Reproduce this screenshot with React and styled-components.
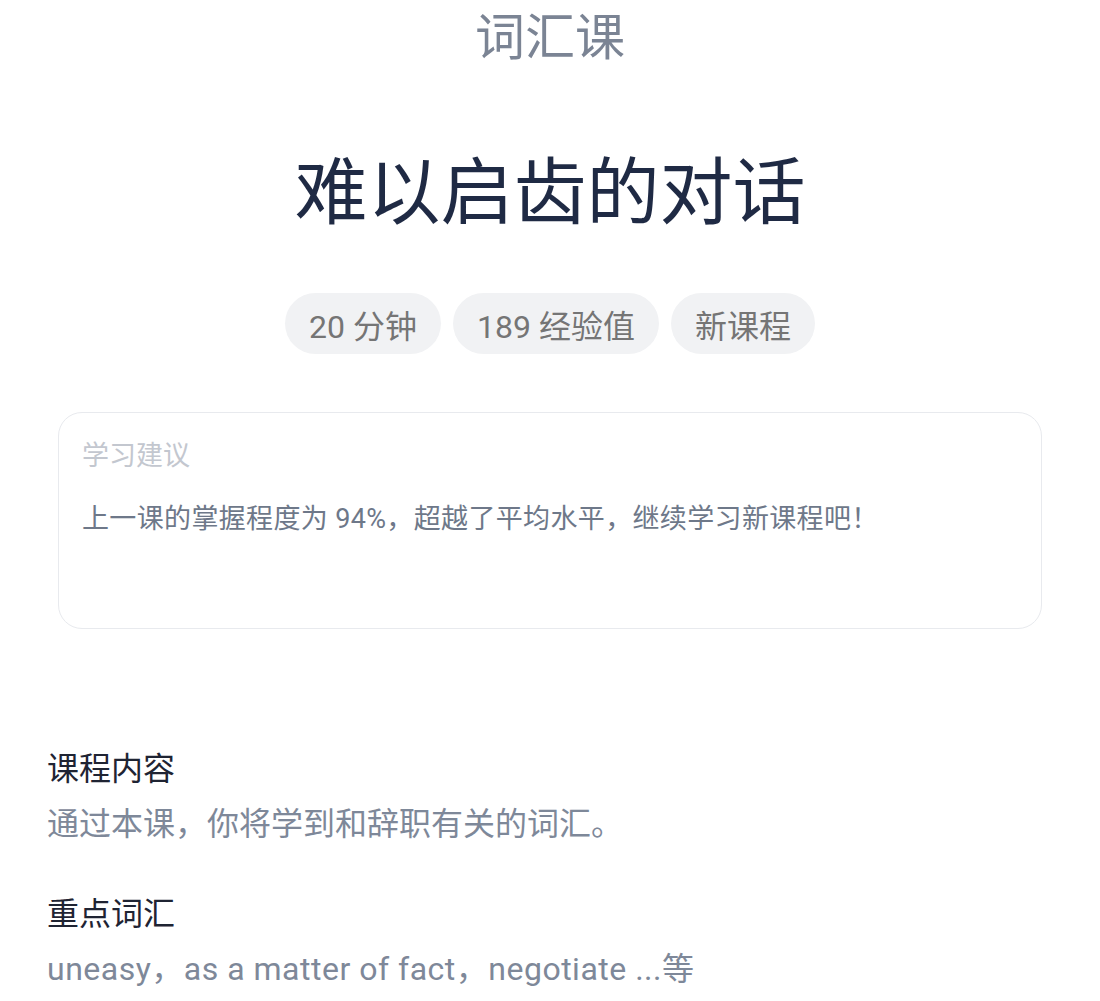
import React from "react";
import styled, { createGlobalStyle } from "styled-components";

const Global = createGlobalStyle`
  html, body { margin: 0; padding: 0; background: #ffffff; }
  body { font-family: Roboto, "Noto Sans CJK SC", sans-serif; }
`;

const Page = styled.div`
  width: 1100px;
  display: flex;
  flex-direction: column;
  align-items: center;
`;

const Category = styled.div`
  font-size: 50px;
  line-height: 76px;
  color: #7b8494;
`;

const Title = styled.h1`
  margin: 67px 0 0;
  font-size: 73px;
  line-height: 100px;
  font-weight: 400;
  color: #1f2a44;
`;

const ChipRow = styled.div`
  margin-top: 50px;
  display: flex;
  gap: 12px;
`;

const Chip = styled.span`
  height: 61px;
  padding: 0 24px;
  border-radius: 31px;
  background: #f1f2f4;
  color: #757575;
  font-size: 32px;
  display: flex;
  align-items: center;
`;

const Card = styled.div`
  margin-top: 58px;
  width: 984px;
  box-sizing: border-box;
  height: 217px;
  border: 1px solid #e8eaee;
  border-radius: 24px;
  padding: 24px 23px;
  align-self: center;
`;

const CardLabel = styled.div`
  font-size: 27px;
  line-height: 38px;
  color: #c3c7cf;
`;

const CardText = styled.div`
  margin-top: 25px;
  font-size: 27px;
  line-height: 38px;
  letter-spacing: 0.35px;
  color: #6e7889;
`;

const Section = styled.section`
  align-self: stretch;
  padding-left: 47px;
  margin-top: ${(p) => p.$top}px;
`;

const SectionHeading = styled.h2`
  margin: 0;
  font-size: 32px;
  line-height: 44px;
  font-weight: 400;
  color: #1f2433;
`;

const SectionBody = styled.p`
  margin: 11px 0 0;
  font-size: 32px;
  line-height: 44px;
  letter-spacing: ${(p) => (p.$wide ? "0.5px" : "0")};
  color: #7e8899;
`;

export default function App() {
  return (
    <>
      <Global />
      <Page>
        <Category>词汇课</Category>
        <Title>难以启齿的对话</Title>
        <ChipRow>
          <Chip>20 分钟</Chip>
          <Chip>189 经验值</Chip>
          <Chip>新课程</Chip>
        </ChipRow>
        <Card>
          <CardLabel>学习建议</CardLabel>
          <CardText>上一课的掌握程度为 94%，超越了平均水平，继续学习新课程吧！</CardText>
        </Card>
        <Section $top={118}>
          <SectionHeading>课程内容</SectionHeading>
          <SectionBody>通过本课，你将学到和辞职有关的词汇。</SectionBody>
        </Section>
        <Section $top={46}>
          <SectionHeading>重点词汇</SectionHeading>
          <SectionBody $wide>uneasy，as a matter of fact，negotiate ...等</SectionBody>
        </Section>
      </Page>
    </>
  );
}
